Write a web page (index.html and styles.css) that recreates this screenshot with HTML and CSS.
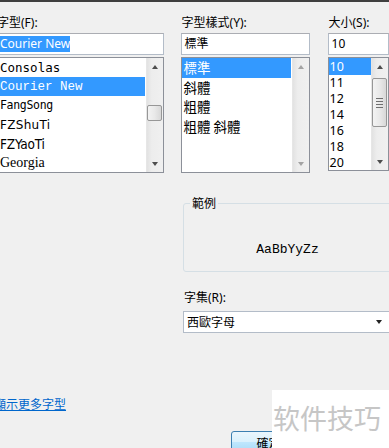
FILE: index.html
```html
<!DOCTYPE html>
<html lang="zh-Hant">
<head>
<meta charset="utf-8">
<title>字型</title>
<link rel="stylesheet" href="styles.css">
</head>
<body>
<div class="topbar"></div>
<div class="cols">
  <div class="col col-font">
    <div class="lbl">字型(F):</div>
    <div class="tb"><span class="sel">Courier New</span></div>
    <div class="lb">
      <ul class="items items-font">
        <li class="f-consolas">Consolas</li>
        <li class="f-courier on">Courier New</li>
        <li class="f-fang">FangSong</li>
        <li class="f-shu">FZShuTi</li>
        <li class="f-yao">FZYaoTi</li>
        <li class="f-georgia">Georgia</li>
      </ul>
      <div class="sb">
        <span class="arr up"></span>
        <div class="track"><span class="thumb thumb-font"></span></div>
        <span class="arr down"></span>
      </div>
    </div>
  </div>
  <div class="col col-style">
    <div class="lbl">字型樣式(Y):</div>
    <div class="tb"><span class="val">標準</span></div>
    <div class="lb">
      <ul class="items items-style">
        <li class="on">標準</li>
        <li>斜體</li>
        <li>粗體</li>
        <li>粗體 斜體</li>
      </ul>
      <div class="sb sb-off">
        <span class="arr up"></span>
        <div class="track"></div>
        <span class="arr down"></span>
      </div>
    </div>
  </div>
  <div class="col col-size">
    <div class="lbl">大小(S):</div>
    <div class="tb"><span class="val">10</span></div>
    <div class="lb lb-size">
      <ul class="items items-size">
        <li class="on">10</li>
        <li>11</li>
        <li>12</li>
        <li>14</li>
        <li>16</li>
        <li>18</li>
        <li>20</li>
      </ul>
      <div class="sb">
        <span class="arr up"></span>
        <div class="track"><span class="thumb thumb-size"><i></i><i></i><i></i><i></i></span></div>
        <span class="arr down"></span>
      </div>
    </div>
  </div>
</div>

<div class="lower">
  <fieldset class="sample">
    <legend>範例</legend>
    <div class="sample-text">AaBbYyZz</div>
  </fieldset>
  <div class="lbl lbl-charset">字集(R):</div>
  <div class="combo"><span>西歐字母</span><span class="combo-arr"></span></div>
</div>

<div class="linkrow"><a class="more" href="#">顯示更多字型</a></div>

<div class="btnrow"><button class="btn">確定</button></div>

<div class="watermark">软件技巧</div>
</body>
</html>
```

FILE: styles.css
```css
html, body {
  margin: 0;
  padding: 0;
}
body {
  width: 389px;
  height: 448px;
  overflow: hidden;
  background: #f0f0f0;
  font-family: "Noto Sans", "Noto Sans CJK TC", sans-serif;
  font-size: 12px;
  color: #000;
  position: relative;
}
.topbar {
  height: 2px;
  background: #3f3f3f;
}
.cols {
  display: flex;
  margin-top: 13px;
  margin-left: -4px;
  gap: 17px;
}
.col {
  display: flex;
  flex-direction: column;
}
.col-font { width: 169px; }
.col-style { width: 130px; }
.col-size { width: 62px; margin-left: 1px; }
.lbl {
  height: 16px;
  line-height: 16px;
  padding-left: 1px;
  margin-bottom: 2px;
  white-space: nowrap;
}
.tb {
  height: 20px;
  border: 1px solid #b3bcc8;
  border-top-color: #abadb3;
  background: #fff;
  display: flex;
  align-items: center;
  padding-left: 3px;
  margin-bottom: 2px;
}
.sel {
  background: #3399ff;
  color: #fff;
  line-height: 16px;
  font-size: 12px;
}
.val { font-size: 12px; line-height: 16px; }
.lb {
  height: 114px;
  border: 1px solid #8c9099;
  background: #fff;
  display: flex;
  overflow: hidden;
}
.lb-size { height: 112px; }
.items {
  list-style: none;
  margin: 0;
  padding: 0;
  flex: 1;
  min-width: 0;
}
.items li {
  white-space: nowrap;
  padding-left: 2px;
  margin-right: 1px;
}
.items li.on {
  background: #3399ff;
  color: #fff;
}
.items-font li {
  height: 19px;
  line-height: 19px;
  font-size: 13px;
  padding-left: 3px;
}
.items-font li.f-courier { line-height: 20px; }
.f-consolas { font-family: "DejaVu Sans Mono", monospace; font-size: 12.5px !important; }
.f-courier { font-family: "Liberation Mono", monospace; font-size: 12.5px !important; }
.f-fang { font-family: "DejaVu Sans Mono", monospace; font-size: 11.5px !important; letter-spacing: -0.3px; }
.f-shu { font-family: "DejaVu Sans", sans-serif; font-size: 12px !important; letter-spacing: 0.3px; line-height: 21px !important; }
.f-yao { font-family: "DejaVu Sans Condensed", "DejaVu Sans", sans-serif; font-size: 13.5px !important; line-height: 21px !important; letter-spacing: -0.2px; }
.f-georgia { font-family: "Liberation Serif", serif; font-size: 14px !important; line-height: 20px !important; }
.items-style li {
  height: 19.5px;
  line-height: 19.5px;
  font-size: 13.5px;
  font-family: "Noto Sans CJK TC", sans-serif;
}
.items-size li {
  height: 16px;
  line-height: 16px;
  font-size: 12.5px;
  padding-left: 1px;
  margin-right: 0;
}
.items-size li.on { height: 17px; line-height: 17px; }
.sb {
  width: 17px;
  flex: none;
  display: flex;
  flex-direction: column;
  background: linear-gradient(to right, #e2e2e2, #ededed 30%, #f0f0f0);
  border-left: 1px solid #e6e6e6;
  box-sizing: border-box;
}
.arr {
  height: 17px;
  flex: none;
  display: flex;
  align-items: center;
  justify-content: center;
}
.arr::before {
  content: "";
  width: 0;
  height: 0;
  border-left: 3.5px solid transparent;
  border-right: 3.5px solid transparent;
}
.arr.up::before { border-bottom: 4px solid #4d4d4d; }
.arr.down::before { border-top: 4px solid #4d4d4d; }
.sb-off .arr.up::before { border-bottom-color: #a3a3a3; }
.sb-off .arr.down::before { border-top-color: #a3a3a3; }
.track {
  flex: 1;
  display: flex;
  flex-direction: column;
}
.thumb {
  display: block;
  width: 15px;
  box-sizing: border-box;
  border: 1px solid #979797;
  border-radius: 2px;
  background: linear-gradient(to right, #f3f3f3, #e9e9e9 50%, #d8d8d8);
}
.thumb-font {
  height: 16px;
  margin-top: 30px;
}
.thumb-size {
  height: 49px;
  margin-top: 3px;
  display: flex;
  flex-direction: column;
  align-items: center;
  justify-content: center;
  gap: 2px;
}
.thumb-size i {
  display: block;
  width: 7px;
  height: 1px;
  background: #6f6f6f;
}
.lower {
  margin-left: 183px;
  margin-top: 23px;
  width: 212px;
}
.sample {
  margin: 0;
  padding: 0;
  height: 76px;
  border: 1px solid #d5dfe5;
  border-radius: 3px;
  box-sizing: border-box;
  min-width: 0;
}
.sample legend {
  margin-left: 6px;
  padding: 0 2px;
  font-size: 12px;
  line-height: 14px;
  font-family: "Noto Sans CJK TC", sans-serif;
}
.sample-text {
  text-align: center;
  font-family: "Liberation Mono", monospace;
  font-size: 13px;
  line-height: 16px;
  margin-top: 32px;
  padding-right: 3px;
}
.lbl-charset {
  margin-top: 18px;
  margin-bottom: 5px;
}
.combo {
  height: 20px;
  border: 1px solid #b3bcc8;
  background: #fff;
  display: flex;
  align-items: center;
  justify-content: space-between;
  padding-left: 3px;
  padding-right: 12px;
}
.combo-arr {
  width: 0;
  height: 0;
  border-left: 3.5px solid transparent;
  border-right: 3.5px solid transparent;
  border-top: 4px solid #222;
}
.linkrow {
  margin-top: 64px;
  margin-left: -6px;
  line-height: 16px;
}
.more {
  color: #0066cc;
  text-decoration: underline;
  font-size: 12px;
}
.btnrow {
  margin-top: 18px;
  margin-left: 231px;
}
.btn {
  width: 75px;
  height: 23px;
  border: 1px solid #3c7fb1;
  border-radius: 3px;
  background: linear-gradient(#eaf6fd, #d9f0fc 50%, #bee6fd 50%, #a7d9f5);
  font-family: "Noto Sans CJK TC", sans-serif;
  font-size: 12px;
  padding: 0;
  line-height: 20px;
  color: #000;
}
.watermark {
  position: absolute;
  left: 272px;
  top: 390px;
  width: 117px;
  height: 58px;
  background: #fff;
  color: #c6c6c6;
  font-family: "Noto Sans CJK SC", sans-serif;
  font-size: 27px;
  line-height: 32px;
  padding-top: 12px;
  padding-left: 1px;
  box-sizing: border-box;
  white-space: nowrap;
  overflow: hidden;
}
```
